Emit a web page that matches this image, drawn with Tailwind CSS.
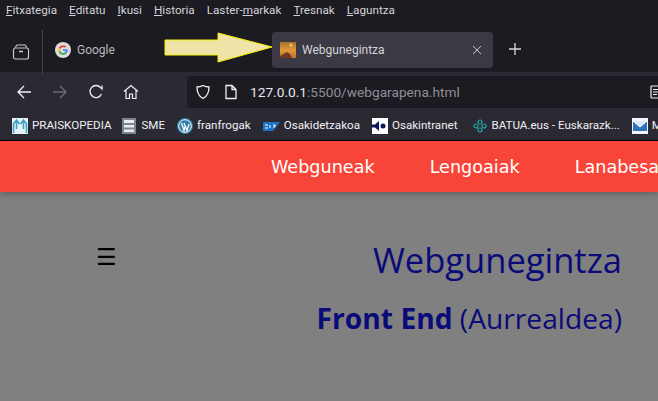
<!DOCTYPE html>
<html lang="en">
<head>
  <meta charset="UTF-8">
  <title>Webgunegintza</title>
  <script src="https://cdn.jsdelivr.net/npm/@tailwindcss/browser@4"></script>
</head>
<body class="w-[658px] h-[401px] overflow-hidden bg-[#808080] font-['Roboto',sans-serif]">
  <!-- menu bar -->
  <div class="h-[22px] bg-[#1c1b22] flex items-center pl-[6px] gap-[12px] text-[11.700px] text-[#d4d4d8]">
    <span><u>F</u>itxategia</span>
    <span><u>E</u>ditatu</span>
    <span><u>I</u>kusi</span>
    <span><u>H</u>istoria</span>
    <span>Laster-<u>m</u>arkak</span>
    <span><u>T</u>resnak</span>
    <span><u>L</u>aguntza</span>
  </div>

  <!-- tab strip -->
  <div class="relative h-[50px] bg-[#1c1b22] flex items-start pt-[10px] text-[12px] text-[#b8b8bc]">
    <div class="w-[43px] h-[44px] -mt-[2px] border-r border-[#45454b] flex items-center justify-center">
      <svg width="18" height="18" viewBox="0 0 18 18" fill="none" stroke="#c8c8cc" stroke-width="1.2"><path d="M3 4.500 5 2h8l2 2.500"/><rect x="1.500" y="5" width="15" height="11" rx="2"/><path d="M7 8.500h4" stroke-width="1.500"/></svg>
    </div>
    <div class="flex items-center h-[36px] pl-[12px] gap-[6px] w-[229px]">
      <svg width="16" height="16" viewBox="0 0 16 16"><circle cx="8" cy="8" r="8" fill="#dcdcdc"/><path d="M8 3.200a4.800 4.800 0 0 1 3.300 1.300L10 5.800A3 3 0 0 0 5.200 7L3.700 5.800A4.800 4.800 0 0 1 8 3.200z" fill="#ea4335"/><path d="M3.700 5.800 5.200 7a3 3 0 0 0 0 2l-1.500 1.200a4.800 4.800 0 0 1 0-4.400z" fill="#fbbc05"/><path d="M3.700 10.200 5.200 9A3 3 0 0 0 10 10.300l1.400 1.100A4.800 4.800 0 0 1 3.700 10.200z" fill="#34a853"/><path d="M8 7.200h4.700a4.800 4.800 0 0 1-1.300 4.200L10 10.300a2 2 0 0 0 .8-1.300H8z" fill="#4285f4"/></svg>
      <span>Google</span>
    </div>
    <div class="flex items-center h-[36px] w-[221px] rounded bg-[#3a3944] pl-[8px] pr-[11px] text-[#d4d4d8]">
      <svg class="mr-[6px]" width="16" height="16" viewBox="0 0 16 16"><defs><linearGradient id="sky" x1="0" y1="0" x2="0" y2="1"><stop offset="0" stop-color="#a8702c"/><stop offset="0.5" stop-color="#e29a3a"/><stop offset="1" stop-color="#c9692c"/></linearGradient></defs><rect width="16" height="16" fill="url(#sky)"/><circle cx="11" cy="3" r="1.500" fill="#f0c970"/><path d="M0 16v-2l7-4 3 2 2 4z" fill="#6e3a22"/></svg>
      <span>Webgunegintza</span>
      <svg class="ml-auto" width="10" height="10" viewBox="0 0 10 10" stroke="#c4c4c8" fill="none"><path d="M1 1l8 8M9 1l-8 8"/></svg>
    </div>
    <svg class="ml-[15px] mt-[10px]" width="14" height="14" viewBox="0 0 14 14" stroke="#d8d8dc" stroke-width="1.300" fill="none"><path d="M7 1v12M1 7h12"/></svg>
    <!-- annotation arrow drawn over the tabs -->
    <svg class="absolute left-[164px] top-[10px]" width="109" height="32" viewBox="0 0 109 32"><path d="M1 8h53V1l54 14-54 15v-7H1z" fill="#efe3a8" stroke="#f5ef00"/></svg>
  </div>

  <!-- toolbar -->
  <div class="h-[36px] bg-[#2b2a33] flex items-center pt-[4px] pl-[16px]">
    <svg width="16" height="16" viewBox="0 0 16 16" fill="none" stroke="#f0f0f4" stroke-width="1.300"><path d="M15 8H2M8 2 2 8l6 6"/></svg>
    <svg class="ml-[20px]" width="16" height="16" viewBox="0 0 16 16" fill="none" stroke="#6e6d75" stroke-width="1.300"><path d="M1 8h13M8 2l6 6-6 6"/></svg>
    <svg class="ml-[20px]" width="16" height="16" viewBox="0 0 16 16" fill="none" stroke="#f0f0f4" stroke-width="1.300"><path d="M13.500 10a6 6 0 1 1-1-6.500L14 5V1.500"/></svg>
    <svg class="ml-[19px]" width="16" height="16" viewBox="0 0 16 16" fill="none" stroke="#f0f0f4" stroke-width="1.200"><path d="M1 7.500 8 1.500l7 6M3 6v8.500h3.500V10h3v4.500H13V6"/></svg>
    <div class="ml-[48px] flex-1 h-[32px] rounded-l bg-[#1c1b22] flex items-center pl-[8px]">
      <svg width="16" height="16" viewBox="0 0 16 16" fill="none" stroke="#f0f0f4" stroke-width="1.300"><path d="M8 1.500c2 1 4 1.500 6 1.500 0 6-2 9.500-6 11.500C4 12.500 2 9 2 3c2 0 4-.5 6-1.500z"/></svg>
      <svg class="ml-[13px]" width="14" height="16" viewBox="0 0 14 16" fill="none" stroke="#f0f0f4" stroke-width="1.300"><path d="M2 1.500h6l4 4v9H2zM8 1.500v4h4"/></svg>
      <span class="ml-[12px] pt-[1px] text-[13.700px] text-[#e8e8ec]">127.0.0.1<span class="text-[#8f8f96]">:5500/webgarapena.html</span></span>
      <svg class="ml-auto mr-[-2px]" width="10" height="14" viewBox="0 0 10 14" fill="none" stroke="#f0f0f4" stroke-width="1.200"><path d="M10 1H2a1 1 0 0 0-1 1v10a1 1 0 0 0 1 1h8M3 4.500h7M3 7h7M3 9.500h4"/></svg>
    </div>
  </div>

  <!-- bookmarks -->
  <div class="h-[32px] bg-[#2b2a33] flex items-center pt-[4px] pl-[12px] whitespace-nowrap overflow-hidden text-[11.600px] text-[#f0f0f4]">
    <svg class="mr-[4px] shrink-0" width="16" height="16" viewBox="0 0 16 16" fill="none"><rect width="16" height="16" fill="#e4f3f8"/><path d="M1.500 15V6l3-4 3 4M14.500 15V6l-3-4-3 4M4.500 2v9M11.500 2v9" stroke="#3f9fc4" stroke-width="1.600"/></svg>
    <span class="mr-[11px]">PRAISKOPEDIA</span>
    <svg class="mr-[5px] shrink-0" width="14" height="16" viewBox="0 0 14 16"><rect width="14" height="16" fill="#7d8590"/><path d="M2 2h10v3H2zM2 7h10v2.500H2zM2 11.500h10V14H2z" fill="#e8ecef"/></svg>
    <span class="mr-[12px]">SME</span>
    <svg class="mr-[4px] shrink-0" width="16" height="16" viewBox="0 0 16 16"><circle cx="8" cy="8" r="8" fill="#2f7ea6"/><circle cx="8" cy="8" r="6.300" fill="none" stroke="#fff"/><path d="M4.500 5 7 12.500 8.500 7.500M7 5l3 7.500L12 6" fill="none" stroke="#fff" stroke-width="1.300"/></svg>
    <span class="mr-[12px]">franfrogak</span>
    <svg class="mr-[4px] shrink-0" width="17" height="9" viewBox="0 0 17 9"><path d="M0 0h17l-7 9H0z" fill="#1a73c8"/><path d="M2 3h3M2 6h3M7 3v3M10 3h2v2h-2" stroke="#fff" fill="none"/></svg>
    <span class="mr-[12px]">Osakidetzakoa</span>
    <svg class="mr-[4px] shrink-0" width="16" height="16" viewBox="0 0 16 16"><rect width="16" height="16" fill="#fff"/><path d="M7 3 3 6.500H0v3h3L7 13z" fill="#0c1a5a"/><circle cx="11" cy="8" r="2.500" fill="#0c1a5a"/></svg>
    <span class="mr-[16px]">Osakintranet</span>
    <svg class="mr-[4px] shrink-0" width="14" height="14" viewBox="0 0 14 14" fill="none" stroke="#1fa3a8" stroke-width="1.200"><circle cx="7" cy="3" r="2"/><circle cx="7" cy="11" r="2"/><circle cx="3" cy="7" r="2"/><circle cx="11" cy="7" r="2"/></svg>
    <span class="mr-[12px]">BATUA.eus - Euskarazk...</span>
    <svg class="mr-[4px] shrink-0" width="16" height="16" viewBox="0 0 16 16"><rect width="16" height="16" fill="#f2f6fa"/><rect x="1" y="3" width="14" height="10" fill="#2f73b8"/><path d="M1 3l7 6 7-6" fill="#d7e8f6" stroke="#fff"/></svg>
    <span>M</span>
  </div>

  <!-- page -->
  <nav class="h-[52px] border-t border-black bg-[#f8453a] shadow-[0_2px_6px_rgba(0,0,0,0.25)] flex items-center pt-[2px] pl-[271px] gap-[55px] whitespace-nowrap overflow-hidden text-[17.600px] text-white font-['DejaVu_Sans',sans-serif]">
    <span>Webguneak</span>
    <span>Lengoaiak</span>
    <span>Lanabesak</span>
  </nav>
  <main class="relative pr-[36px] text-right text-[#0a0a78] font-['Open_Sans',sans-serif]">
    <div class="absolute left-[96px] top-[47px] text-[23px] leading-[36px] text-black font-['DejaVu_Sans',sans-serif]">☰</div>
    <h1 class="pt-[44px] text-[34.500px] leading-[48px]">Webgunegintza</h1>
    <h2 class="mt-[14px] text-[28.200px] leading-[40px]"><b>Front End</b> (Aurrealdea)</h2>
  </main>
</body>
</html>
